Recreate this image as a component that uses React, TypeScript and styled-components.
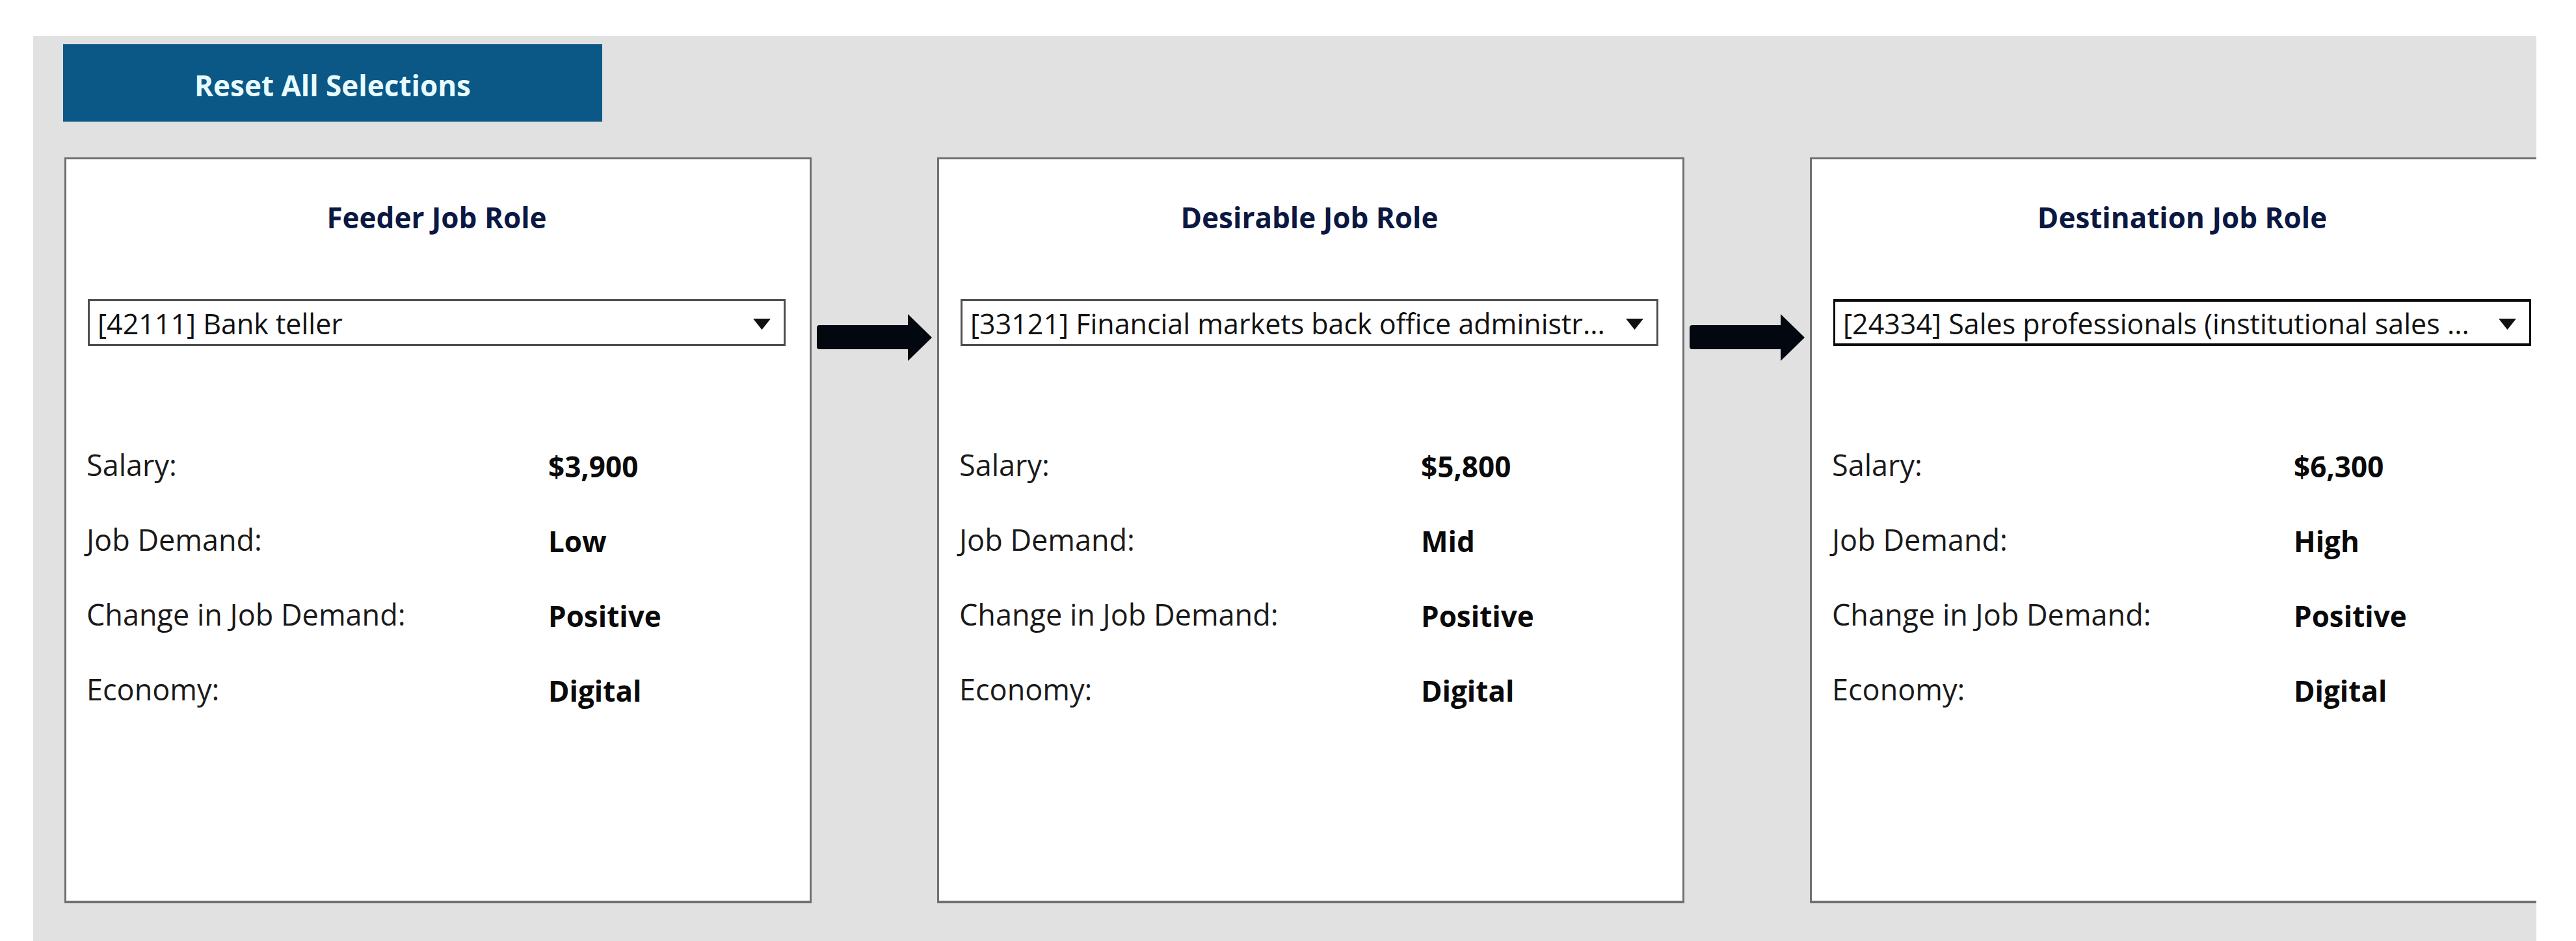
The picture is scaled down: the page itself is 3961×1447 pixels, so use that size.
import React from "react";
import styled, { createGlobalStyle } from "styled-components";

const GlobalStyle = createGlobalStyle`
  html, body {
    margin: 0;
    padding: 0;
    background: #ffffff;
    overflow: hidden;
  }
  body {
    font-family: "Open Sans", "Noto Sans", "Liberation Sans", sans-serif;
  }
  * { box-sizing: border-box; }
`;

const Page = styled.div`
  width: 3961px;
  height: 1447px;
  padding: 55px 0 0 51px;
  background: #ffffff;
  overflow: hidden;
`;

const Dashboard = styled.div`
  width: 3849px;
  height: 1392px;
  background: #e1e1e1;
  overflow: hidden;
  padding: 13px 0 0 48px;
  display: flex;
  flex-direction: column;
  align-items: flex-start;
  gap: 55px;
`;

const ResetButton = styled.button`
  width: 829px;
  height: 119px;
  margin-left: -2px;
  padding: 7px 0 0 0;
  border: none;
  background: #0b5887;
  color: #e8fbff;
  font-family: "Open Sans", "Noto Sans", sans-serif;
  font-weight: 700;
  font-size: 44px;
  line-height: 53px;
  text-align: center;
  cursor: pointer;
`;

const Flow = styled.div`
  display: flex;
  align-items: flex-start;
  flex-shrink: 0;
`;

const Card = styled.section`
  width: 1149px;
  height: 1147px;
  flex-shrink: 0;
  background: #ffffff;
  border: 3px solid #707070;
  border-bottom-width: 4px;
  padding: 63px 37px 0 33px;
  display: flex;
  flex-direction: column;
`;

const Title = styled.h2`
  margin: 0;
  text-align: center;
  font-size: 44px;
  line-height: 53px;
  font-weight: 700;
  color: #0b1842;
`;

const Dropdown = styled.div<{ $active?: boolean }>`
  margin-top: 99px;
  height: 72px;
  display: flex;
  align-items: center;
  gap: 22px;
  padding: 4px 20px 0 12px;
  border: 3px solid ${(p) => (p.$active ? "#0a0a0a" : "#4e4e4e")};
  border-width: ${(p) => (p.$active ? "4px 3px 4px 3px" : "3px")};
  background: #ffffff;
  color: #111111;
`;

const DropdownText = styled.span`
  flex: 1;
  min-width: 0;
  white-space: nowrap;
  font-size: 43px;
  line-height: 62px;
`;

const Caret = styled.svg`
  flex-shrink: 0;
  width: 27px;
  height: 17px;
`;

const Stats = styled.dl`
  margin: 156px 0 0 -2px;
  display: grid;
  grid-template-columns: 710px 1fr;
  row-gap: 59px;
  line-height: 53px;
`;

const Label = styled.dt`
  margin: 0;
  color: #1a1a1a;
  font-size: 45px;
  font-weight: 400;
`;

const Value = styled.dd`
  margin: 0;
  color: #0a0a0a;
  font-size: 44px;
  font-weight: 700;
  padding-top: 3px;
`;

const ArrowSlot = styled.div`
  width: 193px;
  flex-shrink: 0;
  padding-top: 241px;
  display: flex;
  justify-content: center;
`;

const ArrowSvg = styled.svg`
  width: 177px;
  height: 72px;
  display: block;
`;

type Role = {
  title: string;
  selection: string;
  salary: string;
  demand: string;
  change: string;
  economy: string;
  active?: boolean;
};

const roles: Role[] = [
  {
    title: "Feeder Job Role",
    selection: "[42111] Bank teller",
    salary: "$3,900",
    demand: "Low",
    change: "Positive",
    economy: "Digital",
  },
  {
    title: "Desirable Job Role",
    selection: "[33121] Financial markets back office administr...",
    salary: "$5,800",
    demand: "Mid",
    change: "Positive",
    economy: "Digital",
  },
  {
    title: "Destination Job Role",
    selection: "[24334] Sales professionals (institutional sales ...",
    salary: "$6,300",
    demand: "High",
    change: "Positive",
    economy: "Digital",
    active: true,
  },
];

const Arrow = () => (
  <ArrowSlot>
    <ArrowSvg viewBox="0 0 177 72" aria-hidden="true">
      <path
        d="M4 17 H140 V0 L177 36 L140 72 V54 H4 Q0 54 0 50 V21 Q0 17 4 17 Z"
        fill="#03070f"
      />
    </ArrowSvg>
  </ArrowSlot>
);

const RoleCard = ({ role }: { role: Role }) => (
  <Card>
    <Title>{role.title}</Title>
    <Dropdown $active={role.active}>
      <DropdownText>{role.selection}</DropdownText>
      <Caret viewBox="0 0 27 17" aria-hidden="true">
        <polygon points="0,0 27,0 13.5,17" fill="#111111" />
      </Caret>
    </Dropdown>
    <Stats>
      <Label>Salary:</Label>
      <Value>{role.salary}</Value>
      <Label>Job Demand:</Label>
      <Value>{role.demand}</Value>
      <Label>Change in Job Demand:</Label>
      <Value>{role.change}</Value>
      <Label>Economy:</Label>
      <Value>{role.economy}</Value>
    </Stats>
  </Card>
);

export default function App() {
  return (
    <>
      <GlobalStyle />
      <Page>
        <Dashboard>
          <ResetButton type="button">Reset All Selections</ResetButton>
          <Flow>
            {roles.map((role, i) => (
              <React.Fragment key={role.title}>
                {i > 0 && <Arrow />}
                <RoleCard role={role} />
              </React.Fragment>
            ))}
          </Flow>
        </Dashboard>
      </Page>
    </>
  );
}
